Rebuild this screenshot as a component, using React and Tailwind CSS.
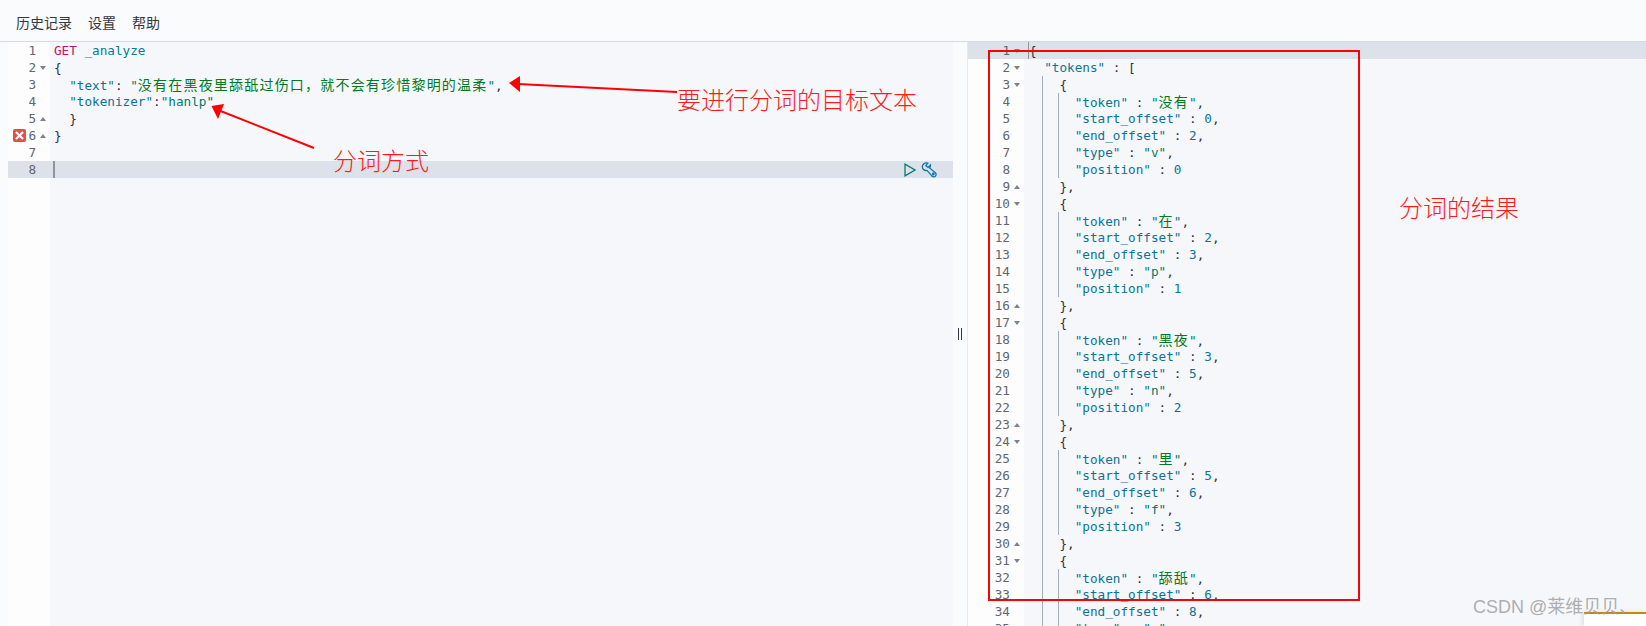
const MONO = "font-['DejaVu_Sans_Mono','Noto_Sans_CJK_SC',monospace]"

// Ace 的配色
const Key = ({ children }) => <span className="text-[#0a7396]">{children}</span>
const Num = ({ children }) => <span className="text-[#0a7396]">{children}</span>
const Str = ({ children }) => <span className="text-[#00786b]">{children}</span>
const Cjk = ({ children }) => (
  <span className="text-[14px] tracking-[1.2px] text-[#007a1f] font-['Noto_Sans_CJK_SC',sans-serif]">{children}</span>
)

function Fold({ dir }) {
  return (
    <svg width="6" height="4" viewBox="0 0 6 4" className="shrink-0 fill-[#7b828e]">
      {dir === 'down' ? <path d="M0 0h6L3 4z" /> : <path d="M0 4h6L3 0z" />}
    </svg>
  )
}

function ErrorMark() {
  return (
    <span className="absolute left-[5px] top-[2px] w-[13px] h-[13px] rounded-[2px] bg-[#d9534a] flex items-center justify-center">
      <svg width="9" height="9" viewBox="0 0 9 9" className="stroke-white" strokeWidth="2.2">
        <path d="M1 1l7 7M8 1L1 8" />
      </svg>
    </span>
  )
}

function WrenchIcon() {
  return (
    <svg width="16" height="16" viewBox="0 0 16 16" fill="none" className="stroke-[#0a78b0]" strokeWidth="1.3">
      <path d="M6.8 1.2A4 4 0 0 0 1.4 5.6 4 4 0 0 0 6 8.4l4.6 5.2a2.4 2.4 0 1 0 3.4-3.2L8.6 6A4 4 0 0 0 9.5 3L7 5.4 4.8 3.6z" />
      <circle cx="12.3" cy="12" r="0.8" />
    </svg>
  )
}

function Line({ n, fold, active, error, guides = [], numRight, codeLeft, children }) {
  return (
    <div className={`relative flex h-[17px] leading-[17px] shrink-0 ${active ? 'bg-[#dde2ea]' : ''}`}>
      <div
        className={`relative shrink-0 flex items-center justify-end pr-[4px] text-[#5f6671] ${numRight} ${active ? '' : 'bg-[#fdfdfe]'}`}
      >
        {error && <ErrorMark />}
        <span>{n}</span>
        <span className="w-[10px] flex justify-end">{fold && <Fold dir={fold} />}</span>
      </div>
      <div className={`relative flex-1 whitespace-pre text-[#2f323a] ${codeLeft}`}>
        {guides.map(g => (
          <span key={g} className="absolute top-0 bottom-0 w-px bg-[#a3acba]" style={{ left: g }} />
        ))}
        {children}
      </div>
    </div>
  )
}

const leftLines = [
  { content: <><span className="text-[#c4105f]">GET</span> <span className="text-[#00808f]">_analyze</span></> },
  { fold: 'down', content: '{' },
  { content: <>  <Key>"text"</Key>: <Str>"</Str><Cjk>没有在黑夜里舔舐过伤口，就不会有珍惜黎明的温柔</Cjk><Str>"</Str>,</> },
  { content: <>  <Key>"tokenizer"</Key>:<Str>"hanlp"</Str></> },
  { fold: 'up', content: '  }' },
  { fold: 'up', error: true, content: '}' },
  { content: '' },
  { active: true, content: '' },
]

const tokens = [
  { t: '没有', s: 0, e: 2, type: 'v', p: 0 },
  { t: '在', s: 2, e: 3, type: 'p', p: 1 },
  { t: '黑夜', s: 3, e: 5, type: 'n', p: 2 },
  { t: '里', s: 5, e: 6, type: 'f', p: 3 },
  { t: '舔舐', s: 6, e: 8, type: 'v', p: 4 },
]

// 把分词结果展开成一行一行
const rightLines = [
  { fold: 'down', active: true, content: '{' },
  { fold: 'down', content: <>  <Key>"tokens"</Key> : [</> },
]
tokens.forEach((k, i) => {
  const g1 = [18]
  const g2 = [18, 34]
  if (i > 0) rightLines.push({ fold: 'up', guides: g1, content: '    },' })
  rightLines.push({ fold: 'down', guides: g1, content: '    {' })
  rightLines.push({ guides: g2, content: <>      <Key>"token"</Key> : <Str>"</Str><Cjk>{k.t}</Cjk><Str>"</Str>,</> })
  rightLines.push({ guides: g2, content: <>      <Key>"start_offset"</Key> : <Num>{k.s}</Num>,</> })
  rightLines.push({ guides: g2, content: <>      <Key>"end_offset"</Key> : <Num>{k.e}</Num>,</> })
  rightLines.push({ guides: g2, content: <>      <Key>"type"</Key> : <Str>"{k.type}"</Str>,</> })
  rightLines.push({ guides: g2, content: <>      <Key>"position"</Key> : <Num>{k.p}</Num></> })
})

function Note({ className, children }) {
  return (
    <span className={`absolute text-[24px] leading-[28px] font-light text-[#ff1a1a] font-['Noto_Sans_CJK_SC',serif] ${className}`}>
      {children}
    </span>
  )
}

export default function App() {
  return (
    <div className={`relative h-[626px] w-[1646px] overflow-hidden bg-[#fafbfd] text-[12.66px] ${MONO}`}>
      {/* 菜单 */}
      <div className="h-[41px] flex items-center gap-4 pl-4 pt-1 text-[14px] text-[#343741] font-['Noto_Sans_CJK_SC',sans-serif]">
        <span>历史记录</span>
        <span>设置</span>
        <span>帮助</span>
      </div>

      <div className="flex h-[585px] border-t border-[#d3dae6]">
        {/* 左侧请求编辑器 */}
        <div className="ml-2 w-[945px] shrink-0 flex flex-col bg-[linear-gradient(to_right,#fdfdfe_42px,#f5f7fa_42px)]">
          {leftLines.map((l, i) => (
            <Line key={i} n={i + 1} fold={l.fold} active={l.active} error={l.error} numRight="w-[42px]" codeLeft="pl-[4px]">
              {l.content}
              {l.active && <span className="absolute left-[3px] top-0 bottom-0 w-[2px] bg-[#8f959e]" />}
              {l.active && (
                <span className="absolute right-[16px] top-[1px] flex items-center gap-[5px]">
                  <svg width="12" height="14" viewBox="0 0 12 14" fill="none" className="stroke-[#017d73]" strokeWidth="1.3">
                    <path d="M1 1.2v11.6L11 7z" />
                  </svg>
                  <WrenchIcon />
                </span>
              )}
            </Line>
          ))}
        </div>

        {/* 拖动条 */}
        <div className="w-[14px] shrink-0 flex items-center justify-center gap-[2px]">
          <span className="w-px h-[12px] bg-[#343741]" />
          <span className="w-px h-[12px] bg-[#343741]" />
        </div>

        {/* 右侧响应结果 */}
        <div className="flex-1 flex flex-col overflow-hidden border-l border-[#e6e9ef] bg-[linear-gradient(to_right,#ffffff_56px,#f5f7fa_56px)]">
          {rightLines.map((l, i) => (
            <Line key={i} n={i + 1} fold={l.fold} active={l.active} guides={l.guides} numRight="w-[56px]" codeLeft="pl-[5px]">
              {l.content}
              {l.active && <span className="absolute left-[4px] top-0 bottom-0 w-px bg-[#8f959e]" />}
            </Line>
          ))}
        </div>
      </div>

      {/* 标注 */}
      <svg className="absolute left-0 top-0 pointer-events-none" width="1646" height="626">
        <path d="M677 92L518 84" stroke="#ff0000" strokeWidth="2" fill="none" />
        <path d="M509 83L520 76L520 92z" fill="#ff0000" />
        <path d="M314 148L218 110" stroke="#ff0000" strokeWidth="2" fill="none" />
        <path d="M211.5 106L224 104L218 119z" fill="#ff0000" />
      </svg>
      <div className="absolute left-[988px] top-[50px] w-[372px] h-[551px] border-2 border-[#ff0000]" />
      <Note className="left-[677px] top-[85px]">要进行分词的目标文本</Note>
      <Note className="left-[333px] top-[146px]">分词方式</Note>
      <Note className="left-[1399px] top-[193px]">分词的结果</Note>

      {/* 右下角 */}
      <div className="absolute left-[1584px] top-[612px] right-0 bottom-0 bg-white border-t-2 border-[#cc8800] shadow-[-2px_0_4px_rgba(0,0,0,0.1)]" />
      <span className="absolute left-[1473px] top-[594px] text-[18px] leading-[26px] text-[#9a9a9a]/80 font-['Liberation_Sans','Noto_Sans_CJK_SC',sans-serif]">
        CSDN @莱维贝贝、
      </span>
    </div>
  )
}
